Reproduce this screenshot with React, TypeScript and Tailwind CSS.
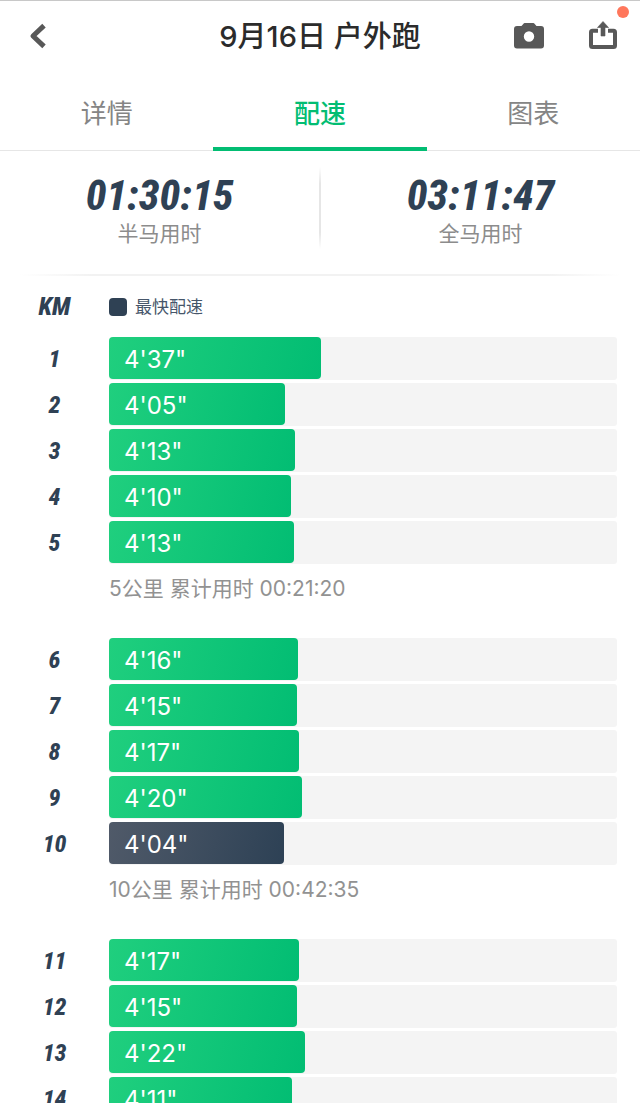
import React from "react";

type Split = { km: number; pace: string; fill: number; fastest?: boolean };
type Group = { splits: Split[]; summary?: string };

const TRACK = 508;

const groups: Group[] = [
  {
    splits: [
      { km: 1, pace: "4'37\"", fill: 212 },
      { km: 2, pace: "4'05\"", fill: 176 },
      { km: 3, pace: "4'13\"", fill: 186 },
      { km: 4, pace: "4'10\"", fill: 182 },
      { km: 5, pace: "4'13\"", fill: 185 },
    ],
    summary: "5公里 累计用时 00:21:20",
  },
  {
    splits: [
      { km: 6, pace: "4'16\"", fill: 189 },
      { km: 7, pace: "4'15\"", fill: 188 },
      { km: 8, pace: "4'17\"", fill: 190 },
      { km: 9, pace: "4'20\"", fill: 193 },
      { km: 10, pace: "4'04\"", fill: 175, fastest: true },
    ],
    summary: "10公里 累计用时 00:42:35",
  },
  {
    splits: [
      { km: 11, pace: "4'17\"", fill: 190 },
      { km: 12, pace: "4'15\"", fill: 188 },
      { km: 13, pace: "4'22\"", fill: 196 },
      { km: 14, pace: "4'11\"", fill: 183 },
    ],
  },
];

const numeral =
  "font-['Roboto_Condensed','Lato',sans-serif] font-extrabold italic text-[#2f4154]";

function Header() {
  return (
    <header className="grid grid-cols-[1fr_auto_1fr] items-center border-t border-[#c8c8c8] h-[72px] shrink-0">
      <button type="button" aria-label="返回" className="ml-[28px] justify-self-start">
        <svg width="20" height="28" viewBox="0 0 20 28" fill="none" stroke="#585858" strokeWidth="5" strokeLinejoin="round">
          <path d="M16 2.600 5 13l11 10.400" />
        </svg>
      </button>
      <h1 className="text-[29px] leading-10 font-medium text-[#2b2b2b]">9月16日 户外跑</h1>
      <div className="mr-[23px] flex items-center gap-[45px] justify-self-end">
        <button type="button" aria-label="拍照">
          <svg width="30" height="28" viewBox="0 0 30 28" fill="#585858">
            <path
              fillRule="evenodd"
              d="M10.500 0h9a1 1 0 0 1 .8.4L22.500 3H27a3 3 0 0 1 3 3v16.500a3 3 0 0 1-3 3H3a3 3 0 0 1-3-3V6a3 3 0 0 1 3-3h4.500l2.200-2.600a1 1 0 0 1 .8-.4ZM15 8.300a5.200 5.200 0 1 0 0 10.400 5.200 5.200 0 0 0 0-10.400Z"
            />
          </svg>
        </button>
        <button type="button" aria-label="分享" className="relative">
          <svg width="28" height="32" viewBox="0 0 28 32" fill="none">
            <path
              d="M9 9.800H3.500a1.500 1.500 0 0 0-1.500 1.500V24.500a1.500 1.500 0 0 0 1.500 1.500h21A1.500 1.500 0 0 0 26 24.500V11.300a1.500 1.500 0 0 0-1.500-1.500H19"
              stroke="#585858"
              strokeWidth="4"
            />
            <path d="M14 .5 19.500 6.500H16v8.500h-4V6.500H8.500Z" fill="#585858" stroke="#585858" strokeWidth=".6" strokeLinejoin="round" />
          </svg>
          <span className="absolute -top-[15px] -right-[12px] size-3 rounded-full bg-[#ff775c]" />
        </button>
      </div>
    </header>
  );
}

function Tabs() {
  const tabs = ["详情", "配速", "图表"];
  return (
    <nav role="tablist" className="grid h-[79px] shrink-0 grid-cols-3 border-b border-[#e6e6e6]">
      {tabs.map((t) => (
        <button
          key={t}
          type="button"
          role="tab"
          aria-selected={t === "配速"}
          className={
            t === "配速"
              ? "-mb-px border-b-4 border-[#02bd73] pt-2 text-[26px] font-medium text-[#02bd73]"
              : "pt-2 pb-[3px] text-[26px] text-[#858585]"
          }
        >
          {t}
        </button>
      ))}
    </nav>
  );
}

function Stat({ value, label }: { value: string; label: string }) {
  return (
    <div className="flex flex-1 flex-col items-center pt-[5px]">
      <span className={`${numeral} text-[42px] leading-[48px]`}>{value}</span>
      <span className="text-[21px] leading-7 text-[#8c8c8c]">{label}</span>
    </div>
  );
}

function Row({ split }: { split: Split }) {
  return (
    <li className="flex items-center">
      <span className={`${numeral} w-[109px] shrink-0 text-center text-2xl leading-8`}>{split.km}</span>
      <div className="h-[43px] flex-1 rounded-[3px] bg-[#f4f4f4]">
        <div
          className={`flex h-[42px] items-center rounded-[4px] pt-[3px] pl-[15px] text-[24px] text-white ${
            split.fastest
              ? "bg-linear-[105deg,#505a69,#2d4155]"
              : "bg-linear-[105deg,#20cf7e,#02bd73]"
          }`}
          style={{ width: `${(split.fill / TRACK) * 100}%` }}
        >
          {split.pace}
        </div>
      </div>
    </li>
  );
}

export default function App() {
  return (
    <div className="flex h-screen flex-col overflow-hidden bg-white font-['Inter','Noto_Sans_CJK_SC',sans-serif]">
      <Header />
      <Tabs />
      <main className="min-h-0 flex-1 overflow-y-auto [scrollbar-width:none]">
        <section className="flex pt-4">
          <Stat value="01:30:15" label="半马用时" />
          <div className="h-[82px] w-[2px] bg-linear-[180deg,transparent,#e6e6e6_20%,#e6e6e6_80%,transparent]" />
          <Stat value="03:11:47" label="全马用时" />
        </section>
        <div className="mx-5 mt-[25px] h-[2px] bg-linear-[90deg,transparent,#f2f2f2_12%,#f2f2f2_88%,transparent]" />
        <div className="flex h-[61px] items-center">
          <span className={`${numeral} w-[109px] text-center text-[25px]`}>KM</span>
          <span className="size-[18px] rounded-[4px] bg-[#2f4154]" />
          <span className="ml-2 pt-0.5 text-[17px] text-[#46566a]">最快配速</span>
        </div>
        {groups.map((g) => (
          <section key={g.splits[0].km} className="pr-[23px]">
            <ul className="flex flex-col gap-[3px]">
              {g.splits.map((s) => (
                <Row key={s.km} split={s} />
              ))}
            </ul>
            {g.summary && (
              <p className="h-[74px] pt-[11px] pl-[109px] text-[21px] leading-7 text-[#929292]">{g.summary}</p>
            )}
          </section>
        ))}
      </main>
    </div>
  );
}
